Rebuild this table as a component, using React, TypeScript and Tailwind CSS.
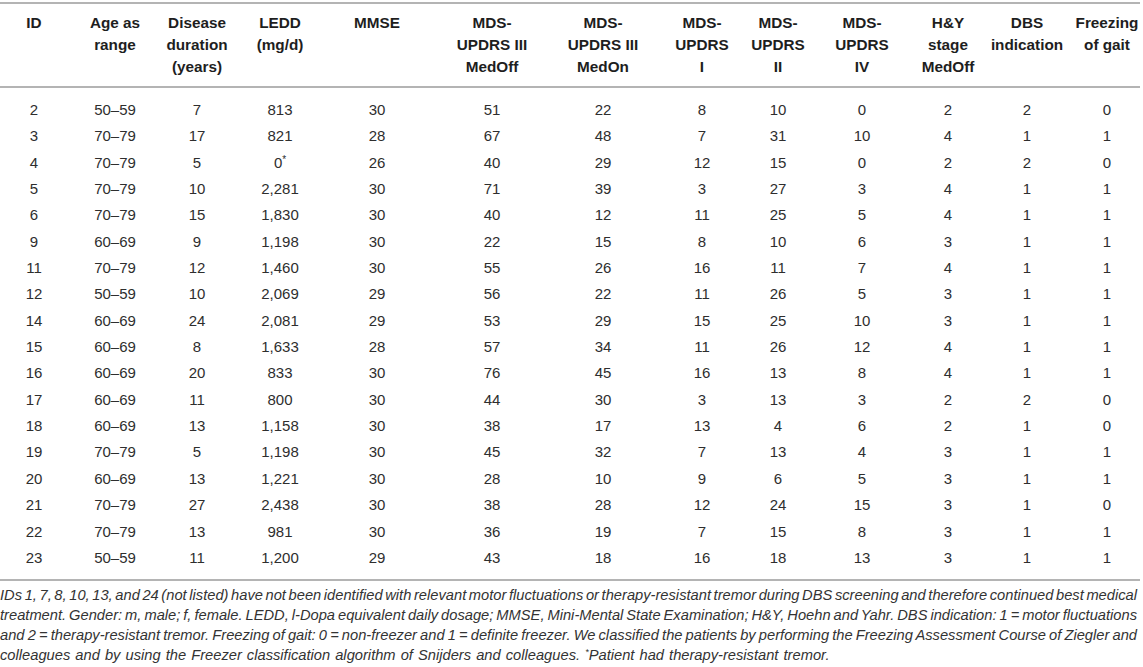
import React from 'react';

// column template: each column is centred on the same x as in the source table
const cols = 'grid grid-cols-[68px_94px_70px_96px_98px_132px_90px_108px_44px_124px_48px_110px_50px]';

const headers: string[][] = [
  ['ID'],
  ['Age as', 'range'],
  ['Disease', 'duration', '(years)'],
  ['LEDD', '(mg/d)'],
  ['MMSE'],
  ['MDS-', 'UPDRS III', 'MedOff'],
  ['MDS-', 'UPDRS III', 'MedOn'],
  ['MDS-', 'UPDRS', 'I'],
  ['MDS-', 'UPDRS', 'II'],
  ['MDS-', 'UPDRS', 'IV'],
  ['H&Y', 'stage', 'MedOff'],
  ['DBS', 'indication'],
  ['Freezing', 'of gait'],
];

const rows: string[][] = [
  ['2', '50–59', '7', '813', '30', '51', '22', '8', '10', '0', '2', '2', '0'],
  ['3', '70–79', '17', '821', '28', '67', '48', '7', '31', '10', '4', '1', '1'],
  ['4', '70–79', '5', '0*', '26', '40', '29', '12', '15', '0', '2', '2', '0'],
  ['5', '70–79', '10', '2,281', '30', '71', '39', '3', '27', '3', '4', '1', '1'],
  ['6', '70–79', '15', '1,830', '30', '40', '12', '11', '25', '5', '4', '1', '1'],
  ['9', '60–69', '9', '1,198', '30', '22', '15', '8', '10', '6', '3', '1', '1'],
  ['11', '70–79', '12', '1,460', '30', '55', '26', '16', '11', '7', '4', '1', '1'],
  ['12', '50–59', '10', '2,069', '29', '56', '22', '11', '26', '5', '3', '1', '1'],
  ['14', '60–69', '24', '2,081', '29', '53', '29', '15', '25', '10', '3', '1', '1'],
  ['15', '60–69', '8', '1,633', '28', '57', '34', '11', '26', '12', '4', '1', '1'],
  ['16', '60–69', '20', '833', '30', '76', '45', '16', '13', '8', '4', '1', '1'],
  ['17', '60–69', '11', '800', '30', '44', '30', '3', '13', '3', '2', '2', '0'],
  ['18', '60–69', '13', '1,158', '30', '38', '17', '13', '4', '6', '2', '1', '0'],
  ['19', '70–79', '5', '1,198', '30', '45', '32', '7', '13', '4', '3', '1', '1'],
  ['20', '60–69', '13', '1,221', '30', '28', '10', '9', '6', '5', '3', '1', '1'],
  ['21', '70–79', '27', '2,438', '30', '38', '28', '12', '24', '15', '3', '1', '0'],
  ['22', '70–79', '13', '981', '30', '36', '19', '7', '15', '8', '3', '1', '1'],
  ['23', '50–59', '11', '1,200', '29', '43', '18', '16', '18', '13', '3', '1', '1'],
];

// footnote is set line by line, as in the printed table (tight, fully justified)
const noteLines = [
  'IDs 1, 7, 8, 10, 13, and 24 (not listed) have not been identified with relevant motor fluctuations or therapy-resistant tremor during DBS screening and therefore continued best medical',
  'treatment. Gender: m, male; f, female. LEDD, l-Dopa equivalent daily dosage; MMSE, Mini-Mental State Examination; H&Y, Hoehn and Yahr. DBS indication: 1 = motor fluctuations',
  'and 2 = therapy-resistant tremor. Freezing of gait: 0 = non-freezer and 1 = definite freezer. We classified the patients by performing the Freezing Assessment Course of Ziegler and',
];

function Cell({ value }: { value: string }) {
  // the starred LEDD value carries a raised footnote mark
  if (value.endsWith('*')) {
    return (
      <div className="flex justify-center">
        <span>
          {value.slice(0, -1)}
          <span className="text-[10px] align-top leading-[20px]">*</span>
        </span>
      </div>
    );
  }
  return <div className="flex justify-center">{value}</div>;
}

function App() {
  return (
    <div className="bg-white min-h-screen w-[1143px] pt-[2px] text-[#2e2e2e] font-['Liberation_Sans',Arial,sans-serif]">
      <div className="w-[1140px]">
        {/* Column headings */}
        <div className={`${cols} border-t-2 border-b-2 border-[#b4b4b4] pt-[8px] pb-[8px] text-[15.3px] leading-[22px] font-bold text-[#1e1e1e]`}>
          {headers.map((h, i) => (
            <div key={i} className="flex justify-center">
              <div className="text-center whitespace-nowrap">
                {h.map((line, j) => (
                  <div key={j}>{line}</div>
                ))}
              </div>
            </div>
          ))}
        </div>

        {/* Patient rows */}
        <div className="border-b-2 border-[#b4b4b4] pt-[9px] pb-[8px] text-[15px] leading-[26.35px]">
          {rows.map((r) => (
            <div key={r[0]} className={cols}>
              {r.map((v, i) => (
                <Cell key={i} value={v} />
              ))}
            </div>
          ))}
        </div>

        {/* Table footnote */}
        <div className="mt-[4px] w-[1137px] italic text-[14.7px] leading-[20px] text-[#333]">
          {noteLines.map((line, i) => (
            <div key={i} className="whitespace-nowrap text-justify [text-align-last:justify] [word-spacing:-1.5px]">
              {line}
            </div>
          ))}
          <div className="whitespace-nowrap [word-spacing:1px]">
            colleagues and by using the Freezer classification algorithm of Snijders and colleagues.{' '}
            <span className="text-[9px] relative -top-[5px]">*</span>Patient had therapy-resistant tremor.
          </div>
        </div>
      </div>
    </div>
  );
}

export default App;
